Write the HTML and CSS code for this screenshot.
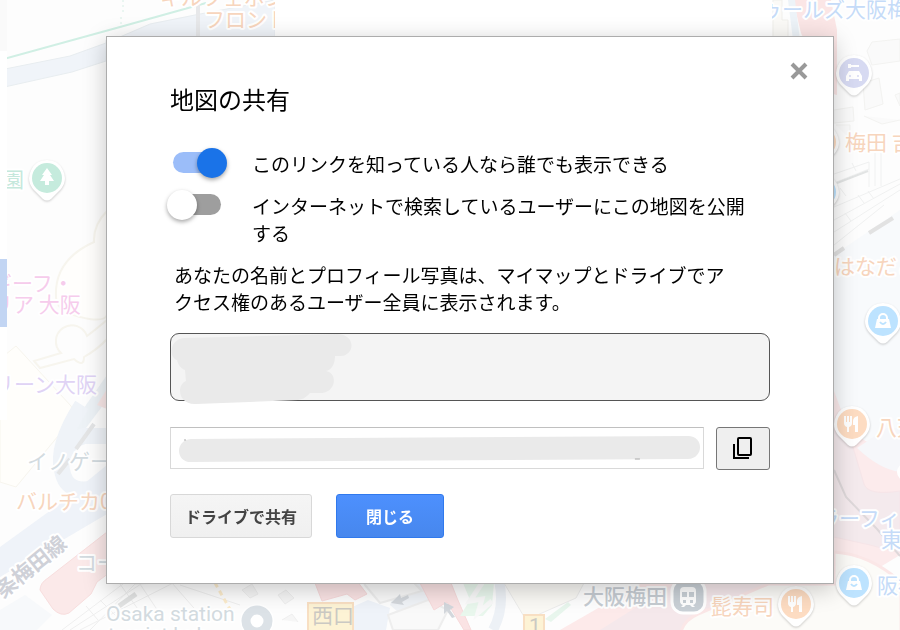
FILE: index.html
```
<!DOCTYPE html>
<html lang="ja">
<head>
<meta charset="utf-8">
<meta name="viewport" content="width=device-width, initial-scale=1">
<title>地図の共有</title>
<link rel="stylesheet" href="styles.css">
</head>
<body>
<svg class="map" viewBox="0 0 900 630" preserveAspectRatio="xMidYMid slice" aria-hidden="true">
  <defs>
    <g id="pin">
      <path class="pin-body" d="M0-18a18 18 0 0 1 14 29L4 21q-4 3-8 0l-10-10A18 18 0 0 1 0-18z"/>
      <circle r="15"/>
    </g>
    <g id="fork" fill="#fff">
      <path d="M-8-8h2v6h1v-6h2v6h1v-6h2v7q0 3-3 4v5h-2v-5q-3-1-3-4zM3 8V1H1v-4q0-4 5-5V8z"/>
    </g>
    <g id="bag">
      <path fill="#fff" d="M-6-2H6L8 7H-8z"/>
      <path fill="none" stroke="#fff" stroke-width="2" d="M-4-1v-2a4 4 0 0 1 8 0v2"/>
      <path fill="none" stroke="#bde3ff" stroke-width="2" d="M-3 1q3 4 6 0"/>
    </g>
  </defs>
  <rect width="900" height="630" fill="#fdfdfd"/>

  <!-- upper left streets -->
  <path fill="#f0f4f9" stroke="#e8edf0" d="M0 70L70 56L106 43L150 24L200 14L275 0V40H106V61L72 72L0 88z"/>
  <path fill="none" stroke="#d0efe4" stroke-width="2" d="M0 60L120 27L206 3"/>
  <path fill="none" stroke="#d8efe6" stroke-dasharray="2 3" d="M123 0v15M121 17v10"/>
  <path stroke="#e7e8ea" stroke-width="4" d="M198 0v36"/>
  <path fill="#fffefc" stroke="#f7f5ee" stroke-width="2" d="M107 211q-14 14-13 31q-40 18-38 55q0 14 24 20q24 6 27-2"/>
  <path fill="none" stroke="#f7f5ee" stroke-width="2" d="M107 320q-12 10-20 16a16 16 0 1 0-26 17L34 361l6 7 34-9q10 9 10-2q14-8 23-18"/>
  <path fill="#fffefb" stroke="#f7f5ee" d="M0 359l16-13 55 60q6 5-8 24l-47 57-16-5z"/>

  <!-- lower left roads and station -->
  <path fill="#edf2f6" d="M72 425l35-50v25l-45 60z"/>
  <path fill="#f9e8e8" d="M97 405l10-16v20z"/>
  <path fill="none" stroke="#eff3f8" stroke-width="16" d="M82 405q-26 40-20 65q5 30 45 14M107 436H84Q68 440 62 458"/>
  <path fill="#eff3f9" d="M0 547L58 505L107 465v49L0 577z"/>
  <path stroke="#e4e5e6" stroke-width="4" d="M58 474l12-15M76 449l18-25"/>
  <path fill="#fbe9e9" stroke="#f8dede" d="M107 532L48 578q-8 5-8 12l13 19q8 8 16 4l22-19 6-12 40-30V532z"/>
  <path fill="#f7f9fb" d="M0 610l25-15 27 20-15 15H0z"/>
  <g fill="none" stroke="#efefef">
    <path d="M62 630l90-68M70 630l105-68M80 630l115-58M90 630l45-46 53-2M100 600l20 20M86 606l12 14M120 584l25 35M140 584l20 30M165 575l35 40M180 585l60 20"/>
    <path stroke="#e2e3e3" stroke-width="5" d="M119 606l17-12"/>
    <path stroke="#fceccc" stroke-width="3" stroke-dasharray="5 4" d="M215 583l16 28"/>
    <path fill="#f6f6f6" d="M242 590l10-6 6 10-8 4zM278 595l8-5 8 8-9 6zM282 620l10-6 6 8"/>
  </g>

  <!-- station front -->
  <path fill="#eff3f9" d="M350 608l18-8 22 8-4 22h-36z"/>
  <path fill="#f0f3f7" d="M398 583h24l12 26-30 8-14-12z"/>
  <path fill="#f9f9f9" stroke="#eeeeee" stroke-width="2" d="M365 585l15 18 42-12-8-8h-50zM388 615l40-15 20 10-10 20h-45z"/>
  <path fill="#fae3e4" stroke="#f7dadb" d="M315 583l7 18 25-7 8 6 12-6-10-13zM420 583l14 27 13-8 17 28h7l-14-32-6-15z"/>
  <path fill="#e9f7ed" d="M463 583h31l-2 22-9 11h-23l10-16z"/>
  <path fill="none" stroke="#f9f9f9" stroke-width="5" d="M482 583l-12 18 12-2-4 14 14-12"/>
  <path fill="none" stroke="#edf1f6" stroke-width="10" d="M499 580q6 28-6 50"/>
  <path fill="#faf9f5" stroke="#ececeb" d="M504 583h80l-8 15-50 22z"/>
  <path fill="#e8f6ed" d="M545 619l23-17 3 3-20 17z"/>
  <path fill="#d3d7dc" d="M391 603l9-9 1 4 7-3 1 3-7 4 2 3zM444 602l10 5-4 3 5 7-3 1-5-7-3 3z"/>
  <rect class="exit" x="308" y="603" width="45" height="29"/>
  <rect class="exit" x="524" y="615" width="20" height="17"/>

  <!-- right side district -->
  <path fill="#fbe6e6" d="M793 0h38l6 30v65l-8-2-28-60z"/>
  <path fill="#edf3f8" d="M788 0h7l5 40h-7z"/>
  <path fill="#fbfaf7" stroke="#f0efeb" d="M773 0h9v20h6v20h-15z"/>
  <g fill="#fafafa" stroke="#f3f3f1">
    <path d="M867 51l5-9 28-3v22l-28 4zM863 83l16-5 4 26-18 6zM834 110l19-3 1 14-20 2zM864 116l18 8 18-4M836 125h14v14M895 95l5-2v13z"/>
  </g>
  <path fill="#f8fafc" d="M834 255l66-45v345l-66-35z"/>
  <g fill="none" stroke="#f0f1f1">
    <path d="M834 174l35-12v25M834 183l35-14M834 207l66-28M834 220l66-36M834 232l66-42M834 245l50-40M852 163l4 8M840 188l6 8M858 195l6 8M845 213l6 8M868 191l6 8M875 150v36M881 150v36"/>
    <path stroke="#e2e2e2" stroke-width="4" d="M834 255l10-7M869 233l24-15"/>
    <path stroke="#e2e4e4" stroke-width="2" d="M837 183l31-12"/>
  </g>
  <path fill="#fcebec" d="M834 391l15 40 25 15 26 27v82l-66 40z"/>
  <path fill="#f4eaed" stroke="#f6e5e8" d="M834 430l18 14 12 40q4 12 36 7v62l-30-8-36-8z"/>
  <path fill="#f6f7fa" d="M857 448l30-20h13v44q-21-3-43-24z"/>
  <circle cx="906" cy="472" r="9" fill="#fff"/>
  <path fill="none" stroke="#ded8da" stroke-width="2" d="M834 470l12 27 31 32 23 27"/>
  <path fill="#fdeaea" d="M560 630l80-46h80l-50 46z"/>
  <path fill="#f5e8eb" d="M600 630l75-47h158v-8l-100 55z"/>
  <path fill="#fcfbf8" stroke="#fbe7e7" stroke-width="3" d="M681 632q3-12 17-18l70-30h66v-32q35 2 67 30v50z"/>

  <!-- place labels -->
  <g class="labels">
    <g class="food">
      <text x="160" y="5">キルフェボン</text>
      <text x="204" y="27">フロント</text>
      <text x="16" y="509">バルチカ03</text>
      <text x="845" y="150">梅田 吉</text>
      <text x="834" y="274">はなだこ</text>
      <text x="876" y="435">八天</text>
      <text x="711" y="614">髭寿司</text>
    </g>
    <g class="pink"><text x="-9" y="291">ギーフ・</text><text x="-8" y="312">リア 大阪</text></g>
    <text class="violet" x="-7" y="392">リーン大阪</text>
    <g class="shop">
      <text x="761" y="17">ゥールズ大阪梅</text>
      <text x="818" y="526">ラーフィ</text>
      <text x="881" y="547">東</text>
      <text x="877" y="593">阪神</text>
    </g>
    <text class="park" x="3" y="187">園</text>
    <g class="station">
      <text x="27" y="469">イノゲート</text>
      <text x="76" y="570">コー</text>
      <text x="106" y="621">Osaka station</text>
      <text x="108" y="642">tourist hub</text>
      <text class="strong" x="583" y="604">大阪梅田</text>
      <text class="exit-name" x="312" y="623">西口</text>
      <text class="exit-name" x="529" y="633">1</text>
      <text class="line" transform="translate(3 599) rotate(-39)">条梅田線</text>
    </g>
  </g>

  <!-- pins -->
  <g transform="translate(47 178)"><use href="#pin" fill="#c5ebdd"/><path fill="#fff" d="M0-10l5 7H3l4 6H2v4h-4V3h-5l4-6h-2z"/></g>
  <g transform="translate(854 73)"><use href="#pin" fill="#d7daf2"/><path fill="#fff" d="M-5-2h10l3 5v5H5V6H-5v2h-3V3zM-6-9h3v1h8v2h-8v1h-3z"/><circle cx="-4" cy="3" r="1" fill="#d7daf2"/><circle cx="4" cy="3" r="1" fill="#d7daf2"/></g>
  <g transform="translate(883 321)"><use href="#pin" fill="#bde3ff"/><use href="#bag"/></g>
  <g transform="translate(854 583)"><use href="#pin" fill="#bde3ff"/><use href="#bag"/></g>
  <g transform="translate(852 424)"><use href="#pin" fill="#fddcc2"/><use href="#fork"/></g>
  <g transform="translate(796 604)"><use href="#pin" fill="#fddcc2"/><use href="#fork"/></g>
  <g transform="translate(821 142)"><use href="#pin" fill="#fddcc2"/></g>
  <g transform="translate(821 192)"><use href="#pin" fill="#bde3ff"/></g>
  <circle cx="257" cy="621" r="11" fill="none" stroke="#fff" stroke-width="12"/>
  <circle cx="257" cy="621" r="11" fill="#fff" stroke="#dce2e7" stroke-width="9"/>
  <g transform="translate(688 597)">
    <rect x="-16" y="-17" width="33" height="33" rx="11" fill="#c9d0d6" stroke="#fff" stroke-width="3"/>
    <path fill="#fff" d="M-4-10h8q4 0 4 4V4q0 3-3 4l2 2H4L2 8h-4l-2 2h-3l2-2q-3-1-3-4V-6q0-4 4-4z"/>
    <path fill="#c9d0d6" d="M-6-5h5v5h-5zM1-5h5v5H1zM-5 3h3v3h-3zM2 3h3v3H2z"/>
  </g>

  <!-- panels beside the map -->
  <path fill="#fff" d="M275 0h497v40H275zM0 0h7v420H0z"/>
  <path fill="#fafafa" d="M0 0h7v51H0z"/>
  <path fill="#c2d5f3" d="M0 259h7v68H0z"/>
</svg>

<main class="page">
  <section class="dialog" role="dialog" aria-labelledby="dialog-title">
    <button class="close" type="button" aria-label="閉じる">
      <svg viewBox="0 0 18 18" width="18" height="18"><path d="M2 2l14 14M16 2L2 16"/></svg>
    </button>
    <h1 id="dialog-title">地図の共有</h1>

    <div class="options">
      <label class="option">
        <input class="switch" type="checkbox" role="switch" checked>
        <span>このリンクを知っている人なら誰でも表示できる</span>
      </label>
      <label class="option">
        <input class="switch" type="checkbox" role="switch">
        <span>インターネットで検索しているユーザーにこの地図を公開する</span>
      </label>
    </div>

    <p class="note">あなたの名前とプロフィール写真は、マイマップとドライブでアクセス権のあるユーザー全員に表示されます。</p>

    <div class="owner">
      <svg class="smudge" viewBox="0 0 184 72" width="184" height="72" aria-hidden="true"><path d="M13 5L167 1c18 1 17 21 3 22h-6c0 9-4 14-9 15 12 2 10 21-4 22h-12c-4 4-6 6-12 7L25 71c-18 1-20-19-10-23l-1-11c-5-2-7-6-8-10C-3 24-1 6 13 5z"/></svg>
    </div>

    <div class="link-row">
      <div class="link">
        <input type="text" aria-label="共有リンク" readonly>
        <svg class="link-cover" viewBox="0 0 520 28" preserveAspectRatio="none" aria-hidden="true"><path d="M12 4L508 1c16 0 16 22 0 23L12 27C-4 27-4 5 12 4z"/><path class="speck" d="M5 5h2M455 24h5"/></svg>
      </div>
      <button class="copy" type="button" aria-label="リンクをコピー">
        <svg viewBox="0 0 20 23" width="20" height="23"><rect x="5" y="1" width="13" height="17" rx="1"/><path d="M1 7v14h15"/></svg>
      </button>
    </div>

    <div class="actions">
      <button class="button" type="button">ドライブで共有</button>
      <button class="button primary" type="button">閉じる</button>
    </div>
  </section>
</main>
</body>
</html>
```

FILE: styles.css
```
* { box-sizing: border-box; }

body {
  margin: 0;
  min-height: 100vh;
  background: #fdfdfd;
  color: #000;
  font: 19px/27px "Noto Sans CJK JP", sans-serif;
}

button, input { font: inherit; margin: 0; }
button { cursor: pointer; }

/* Map backdrop */
.map {
  position: fixed;
  inset: 0;
  width: 100%;
  height: 100%;
}
.pin-body {
  fill: #fff;
  filter: drop-shadow(0 1px 1px rgba(0, 0, 0, .2));
}
.exit { fill: #fdf3d5; stroke: #f8dfc3; stroke-width: 2; }
.labels text {
  font-size: 21px;
  paint-order: stroke;
  stroke: #fff;
  stroke-width: 4px;
  stroke-linejoin: round;
}
.food { fill: #f7d5bd; }
.pink { fill: #f6ccec; }
.violet { fill: #e0d3f5; }
.shop { fill: #c5dbf8; }
.park { fill: #c5e8dc; }
.station { fill: #d3dbe0; font-family: Roboto, "Noto Sans CJK JP", sans-serif; }
.station .strong { fill: #c6ccd2; font-weight: 500; }
.labels .exit-name { fill: #cbc9c3; stroke: none; }
.station .line { fill: #cfd1d8; font-weight: 700; }

/* Dialog */
.page {
  position: relative;
  padding: 36px 66px 46px 106px;
}
.dialog {
  position: relative;
  padding: 44px 63px 45px;
  background: #fff;
  border: 1px solid #acacac;
  box-shadow: 0 5px 22px rgba(0, 0, 0, .22);
}
.close {
  position: absolute;
  top: 21px;
  right: 21px;
  display: grid;
  place-items: center;
  width: 26px;
  height: 26px;
  padding: 0;
  border: 0;
  background: none;
}
.close path { fill: none; stroke: #999; stroke-width: 4; }

h1 {
  margin: 0 0 33px;
  font-size: 24px;
  line-height: 36px;
  font-weight: 400;
}

.options { display: grid; gap: 15px; }
.option {
  display: flex;
  align-items: flex-start;
  gap: 25px;
  padding-right: 12px;
}

.switch {
  appearance: none;
  position: relative;
  flex: none;
  width: 51px;
  height: 21px;
  margin: 2px 6px 0 0;
  border-radius: 11px;
  background: #9e9e9e;
}
.switch::before {
  content: "";
  position: absolute;
  top: -4px;
  left: -3px;
  width: 30px;
  height: 30px;
  border-radius: 50%;
  background: #fff;
  box-shadow: 0 2px 4px rgba(0, 0, 0, .35);
}
.switch:checked { margin: 2px 3px 0; background: #9bbdf9; }
.switch:checked::before { left: 24px; background: #1a73e8; }

.note {
  margin: 15px 0 18px;
  padding: 0 30px 0 4px;
}

.owner {
  position: relative;
  height: 68px;
  border: 1px solid #555;
  border-radius: 9px;
  background: #f4f4f4;
}
.smudge { position: absolute; top: -1px; left: 0; fill: #eaeaea; }

.link-row {
  display: flex;
  align-items: flex-start;
  gap: 12px;
  margin: 26px 0 24px;
}
.link { position: relative; flex: 1; }
.link input {
  display: block;
  width: 100%;
  height: 42px;
  padding: 0 12px;
  border: 1px solid #d9d9d9;
  border-top-color: #c0c0c0;
  background: #fff;
}
.link-cover {
  position: absolute;
  top: 8px;
  left: 9px;
  width: calc(100% - 13px);
  height: 28px;
  fill: #eaeaea;
}
.link-cover .speck { stroke: #aaa; }

.copy {
  display: grid;
  place-items: center;
  width: 54px;
  height: 43px;
  padding: 0;
  border: 1px solid #767676;
  border-radius: 3px;
  background: #efefef;
}
.copy svg { fill: none; stroke: #000; stroke-width: 2; }

.actions { display: flex; gap: 24px; }
.button {
  min-width: 108px;
  height: 44px;
  padding: 0 14px;
  border: 1px solid #d8d8d8;
  border-radius: 3px;
  background: linear-gradient(#f5f5f5, #f0f0f0);
  color: #444;
  font-size: 16px;
  font-weight: 700;
}
.button.primary {
  border-color: #3079ed;
  background: linear-gradient(#4d90fe, #4787ed);
  color: #fff;
}
```
